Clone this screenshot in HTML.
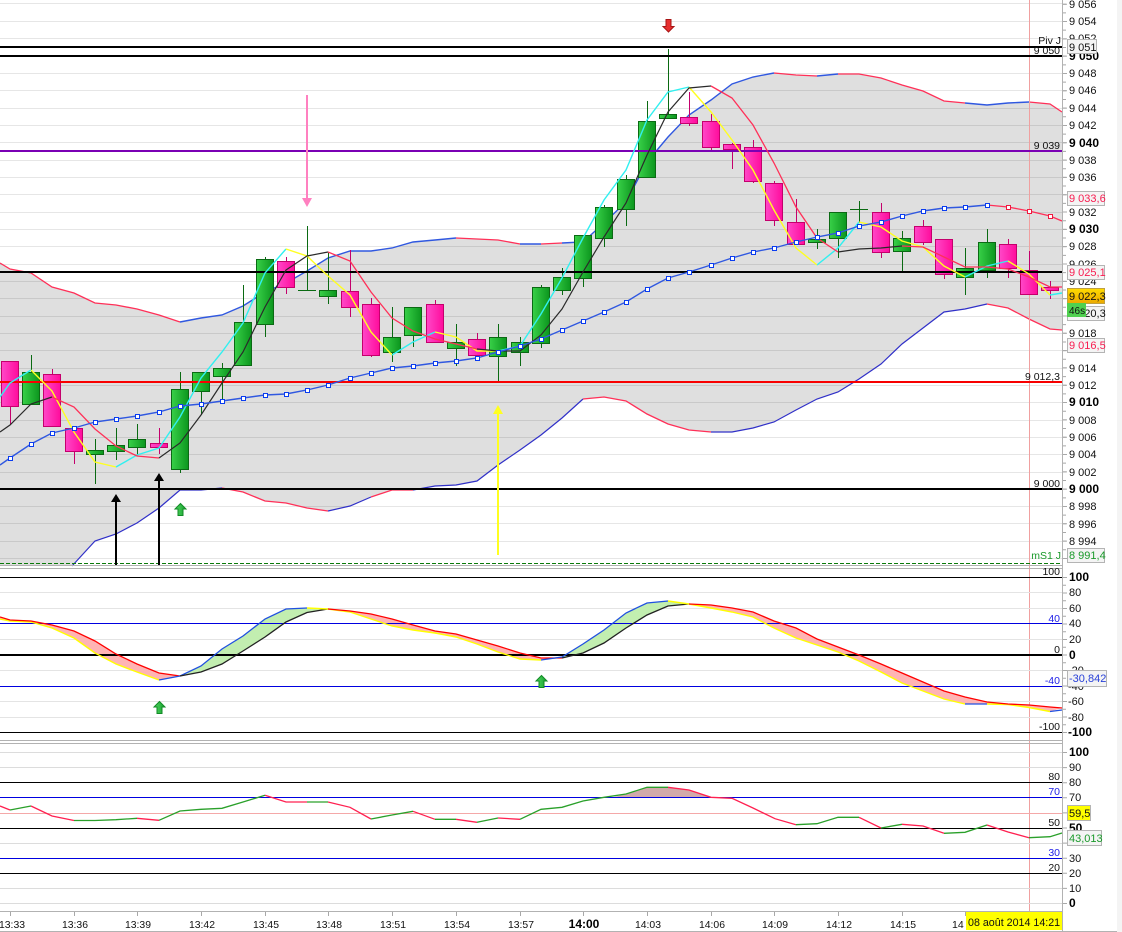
<!DOCTYPE html>
<html><head><meta charset="utf-8"><title>Chart</title>
<style>
html,body{margin:0;padding:0;background:#fff}
svg{display:block}
text{font-family:"Liberation Sans",sans-serif;font-size:11px;fill:#111}
.b{font-weight:bold;font-size:12px;fill:#000}
.s{font-size:10.5px}
.t{font-size:10.4px;text-anchor:middle}
.e{text-anchor:end;font-size:10.5px}
.bl{fill:#2020e8}
.r{fill:#f81c50}
.g{fill:#1a9a2a}
.ln{fill:none;stroke-linejoin:round}
.c{stroke:#30f0f0;stroke-width:1.4;fill:none}
.y{stroke:#ffff20;stroke-width:1.4;fill:none}
.k{stroke:#2a2a2a;stroke-width:1.2;fill:none}
.rd{stroke:#ff3058;stroke-width:1.3;fill:none}
.ub{stroke:#3058e0;stroke-width:1.4;fill:none}
.lb{stroke:#3030c8;stroke-width:1.2;fill:none}
.gb{fill:url(#gg);stroke:#0b6a14}
.pb{fill:url(#pg);stroke:#c4006c}
.box{fill:#f4f4f4;stroke:#b4b4b4}
.ga{fill:url(#ag);stroke:#128a26}
</style></head>
<body>
<svg xmlns="http://www.w3.org/2000/svg" width="1122" height="932" viewBox="0 0 1122 932">
<defs>
<linearGradient id="gg" x1="0" x2="1" y1="0" y2="0"><stop offset="0" stop-color="#38d048"/><stop offset="1" stop-color="#0c961e"/></linearGradient>
<linearGradient id="pg" x1="0" x2="1" y1="0" y2="0"><stop offset="0" stop-color="#ff48c8"/><stop offset="1" stop-color="#ff0c9c"/></linearGradient>
<linearGradient id="ag" x1="0" x2="1" y1="0" y2="0"><stop offset="0" stop-color="#50d860"/><stop offset="1" stop-color="#18a030"/></linearGradient>
<linearGradient id="og" x1="0" x2="0" y1="0" y2="1"><stop offset="0" stop-color="#ffdc00"/><stop offset="1" stop-color="#eca800"/></linearGradient>
</defs>
<rect width="1122" height="932" fill="#fff"/>
<rect x="1117" width="5" height="932" fill="#f4f4f4"/>

<!-- main grid -->
<path stroke="#e6e6e6" fill="none" shape-rendering="crispEdges" d="M0 3.5H1062M0 21.5H1062M0 38.5H1062M0 73.5H1062M0 90.5H1062M0 108.5H1062M0 125.5H1062M0 142.5H1062M0 160.5H1062M0 177.5H1062M0 194.5H1062M0 212.5H1062M0 229.5H1062M0 246.5H1062M0 264.5H1062M0 281.5H1062M0 298.5H1062M0 316.5H1062M0 333.5H1062M0 350.5H1062M0 368.5H1062M0 385.5H1062M0 402.5H1062M0 420.5H1062M0 437.5H1062M0 454.5H1062M0 472.5H1062M0 506.5H1062M0 523.5H1062M0 541.5H1062M0 558.5H1062"/>

<!-- Bollinger fill -->
<polygon fill="#000" fill-opacity=".125" points="0,263 10,269 31,273 52,287 74,293 95,303 116,305 137,309 159,315 180,322 201,318 222,315 243,306 265,292 286,283 307,271 328,258 350,251 371,251 392,248 413,242 435,240 456,238 477,239 498,240 520,244 541,244 562,243 583,242 604,223 626,202 647,162 668,137 689,115 711,100 732,84 753,77 774,73 796,75 817,76 838,74 859,74 881,78 902,85 923,91 944,101 965,103 987,105 1008,103 1029,102 1050,104 1062,112 1062,330 1050,329 1029,319 1008,308 987,304 965,309 944,312 923,328 902,344 881,364 859,379 838,392 817,399 796,410 774,422 753,428 732,432 711,432 689,430 668,424 647,414 626,401 604,397 583,399 562,418 541,435 520,450 498,465 477,481 456,485 435,486 413,490 392,490 371,497 350,506 328,511 307,508 286,503 265,501 243,492 222,488 201,490 180,490 159,508 137,523 116,534 95,541 72,565 0,565"/>

<!-- bands -->
<polyline class="rd" points="0,263 10,269 31,273 52,287 74,293 95,303 116,305 137,309 159,315 180,322"/>
<polyline class="ub" points="180,322 201,318 222,315 243,306 265,292 286,283 307,271 328,258 350,251 371,251 392,248 413,242 435,240 456,238"/>
<polyline class="rd" points="456,238 477,239 498,240 520,244"/>
<polyline class="ub" points="520,244 541,244"/>
<polyline class="rd" points="541,244 562,243"/>
<polyline class="ub" points="562,243 583,242 604,223 626,202 647,162 668,137 689,115 711,100 732,84 753,77 774,73"/>
<polyline class="rd" points="774,73 796,75 817,76"/>
<polyline class="ub" points="817,76 838,74"/>
<polyline class="rd" points="838,74 859,74 881,78 902,85 923,91 944,101 965,103"/>
<polyline class="ub" points="965,103 987,105 1008,103 1029,102"/>
<polyline class="rd" points="1029,102 1050,104 1062,112"/>
<polyline class="lb" points="72,566 95,541 116,534 137,523 159,508 180,490 201,490 222,488"/>
<polyline class="rd" points="222,488 243,492 265,501 286,503 307,508 328,511"/>
<polyline class="lb" points="328,511 350,506 371,497"/>
<polyline class="rd" points="371,497 392,490 413,490"/>
<polyline class="lb" points="413,490 435,486 456,485 477,481 498,465 520,450 541,435 562,418 583,399"/>
<polyline class="rd" points="583,399 604,397 626,401 647,414 668,424 689,430 711,432"/>
<polyline class="lb" points="711,432 732,432 753,428 774,422 796,410 817,399 838,392 859,379 881,364 902,344 923,328 944,312 965,309 987,304"/>
<polyline class="rd" points="987,304 1008,308 1029,319 1050,329 1062,330"/>

<!-- crosshair -->
<rect x="1029" y="0" width="1" height="912" fill="#f0a0a0"/>

<!-- wicks -->
<path stroke="#0a6a12" fill="none" shape-rendering="crispEdges" d="M31.5 355V404M95.5 439V484M116.5 428V460M137.5 424V456M180.5 372V473M201.5 372V415M222.5 363V400M243.5 285V365M265.5 257V337M307.5 226V290M328.5 252V304M392.5 307V362M413.5 307V347M456.5 324V366M498.5 324V381M520.5 337V366M541.5 285V348M562.5 268V295M583.5 235V287M604.5 205V247M626.5 175V226M647.5 101V177M668.5 49V118M817.5 229V249M838.5 212V258M859.5 201V223M902.5 231V271M965.5 248V295M987.5 229V278M298 290.5H316M850 209.5H868"/>
<path stroke="#c4006c" fill="none" shape-rendering="crispEdges" d="M10.5 361V425M52.5 369V426M74.5 428V464M159.5 428V454M286.5 257V294M350.5 250V317M371.5 298V357M435.5 300V343M477.5 333V355M689.5 92V126M711.5 114V150M732.5 143V169M753.5 140V183M774.5 181V226M796.5 199V244M881.5 203V258M923.5 220V245M944.5 239V279M1008.5 239V278M1029.5 251V294M1050.5 281V299"/>

<!-- bodies -->
<g shape-rendering="crispEdges">
<rect class="pb" x="1.5" y="361.5" width="17" height="45"/>
<rect class="gb" x="22.5" y="372.5" width="17" height="32"/>
<rect class="pb" x="43.5" y="374.5" width="17" height="52"/>
<rect class="pb" x="65.5" y="428.5" width="17" height="23"/>
<rect class="gb" x="86.5" y="450.5" width="17" height="4"/>
<rect class="gb" x="107.5" y="445.5" width="17" height="6"/>
<rect class="gb" x="128.5" y="439.5" width="17" height="8"/>
<rect class="pb" x="150.5" y="443.5" width="17" height="4"/>
<rect class="gb" x="171.5" y="389.5" width="17" height="80"/>
<rect class="gb" x="192.5" y="372.5" width="17" height="19"/>
<rect class="gb" x="213.5" y="368.5" width="17" height="8"/>
<rect class="gb" x="234.5" y="322.5" width="17" height="43"/>
<rect class="gb" x="256.5" y="259.5" width="17" height="65"/>
<rect class="pb" x="277.5" y="261.5" width="17" height="26"/>
<rect class="gb" x="319.5" y="290.5" width="17" height="6"/>
<rect class="pb" x="341.5" y="291.5" width="17" height="16"/>
<rect class="pb" x="362.5" y="304.5" width="17" height="51"/>
<rect class="gb" x="383.5" y="337.5" width="17" height="15"/>
<rect class="gb" x="404.5" y="307.5" width="17" height="28"/>
<rect class="pb" x="426.5" y="304.5" width="17" height="38"/>
<rect class="gb" x="447.5" y="342.5" width="17" height="6"/>
<rect class="pb" x="468.5" y="339.5" width="17" height="16"/>
<rect class="gb" x="489.5" y="337.5" width="17" height="19"/>
<rect class="gb" x="511.5" y="342.5" width="17" height="10"/>
<rect class="gb" x="532.5" y="287.5" width="17" height="56"/>
<rect class="gb" x="553.5" y="277.5" width="17" height="13"/>
<rect class="gb" x="574.5" y="235.5" width="17" height="43"/>
<rect class="gb" x="595.5" y="207.5" width="17" height="31"/>
<rect class="gb" x="617.5" y="179.5" width="17" height="30"/>
<rect class="gb" x="638.5" y="121.5" width="17" height="56"/>
<rect class="gb" x="659.5" y="114.5" width="17" height="4"/>
<rect class="pb" x="680.5" y="117.5" width="17" height="6"/>
<rect class="pb" x="702.5" y="121.5" width="17" height="26"/>
<rect class="pb" x="723.5" y="144.5" width="17" height="5"/>
<rect class="pb" x="744.5" y="147.5" width="17" height="34"/>
<rect class="pb" x="765.5" y="183.5" width="17" height="37"/>
<rect class="pb" x="787.5" y="222.5" width="17" height="22"/>
<rect class="gb" x="808.5" y="239.5" width="17" height="3"/>
<rect class="gb" x="829.5" y="212.5" width="17" height="26"/>
<rect class="pb" x="872.5" y="212.5" width="17" height="40"/>
<rect class="gb" x="893.5" y="238.5" width="17" height="13"/>
<rect class="pb" x="914.5" y="226.5" width="17" height="16"/>
<rect class="pb" x="935.5" y="239.5" width="17" height="35"/>
<rect class="gb" x="956.5" y="268.5" width="17" height="9"/>
<rect class="gb" x="978.5" y="242.5" width="17" height="28"/>
<rect class="pb" x="999.5" y="244.5" width="17" height="24"/>
<rect class="pb" x="1020.5" y="270.5" width="17" height="24"/>
<rect class="pb" x="1041.5" y="287.5" width="17" height="3"/>
</g>

<!-- horizontal levels -->
<g shape-rendering="crispEdges">
<rect x="0" y="46" width="1062" height="2" fill="#000"/>
<rect x="0" y="55" width="1062" height="2" fill="#000"/>
<rect x="0" y="150" width="1062" height="2" fill="#7a00b4"/>
<rect x="0" y="271" width="1062" height="2" fill="#000"/>
<rect x="0" y="381" width="1062" height="2" fill="#f80000"/>
<rect x="0" y="488" width="1062" height="2" fill="#000"/>
</g>
<line x1="0" x2="1062" y1="563.5" y2="563.5" stroke="#0a7a0a" stroke-dasharray="4 2"/>

<!-- fast MA -->
<polyline class="c" points="0,397 10,383 31,370"/>
<polyline class="y" points="31,370 52,391 74,432 95,462 116,467"/>
<polyline class="c" points="116,467 137,455 159,448 180,417 201,378 222,352 243,323 265,273 286,249"/>
<polyline class="y" points="286,249 307,256 328,276 350,295 371,332 392,355"/>
<polyline class="c" points="392,355 413,342 435,332"/>
<polyline class="y" points="435,332 456,337 477,351 498,351"/>
<polyline class="c" points="498,351 520,346 541,314 562,278 583,238 604,200 626,170 647,120 668,92 689,87"/>
<polyline class="y" points="689,87 711,112 732,140 753,170 774,210 796,248 817,265"/>
<polyline class="c" points="817,265 838,248 859,222"/>
<polyline class="y" points="859,222 881,227 902,241 923,247 944,266 965,277"/>
<polyline class="c" points="965,277 987,266 1008,261"/>
<polyline class="y" points="1008,261 1029,274 1050,295"/>
<polyline class="c" points="1050,295 1062,293"/>

<!-- slow MA -->
<polyline class="k" points="0,432 10,425 31,404 52,397"/>
<polyline class="rd" points="52,397 74,407 95,429 116,446 137,456 159,458"/>
<polyline class="k" points="159,458 180,443 201,415 222,383 243,352 265,307 286,270 307,256 328,252"/>
<polyline class="rd" points="328,252 350,261 371,292 392,318 413,331 435,339 456,344 477,349"/>
<polyline class="k" points="477,349 498,351 520,351 541,335 562,309 583,272 604,237 626,203 647,155 668,112 689,88 711,86"/>
<polyline class="rd" points="711,86 732,98 753,125 774,163 796,207 817,238 838,252"/>
<polyline class="k" points="838,252 859,249 881,248 902,246"/>
<polyline class="rd" points="902,246 923,247 944,257 965,267 987,267 1008,269 1029,277 1050,287 1062,287"/>

<!-- Blue MA with markers -->
<polyline class="ub" points="0,465 10,458 31,444 52,433 74,428 95,422 116,419 137,416 159,412 180,406 201,404 222,401 243,398 265,395 286,394 307,390 328,385 350,378 371,373 392,368 413,366 435,363 456,361 477,358 498,352 520,346 541,339 562,330 583,321 604,312 626,302 647,289 668,278 689,272 711,265 732,258 753,252 774,248 796,242 817,237 838,233 859,226 881,222 902,216 923,211 944,208 965,207 987,205"/>
<polyline class="rd" points="987,205 1008,207 1029,211 1050,216 1062,221"/>
<path fill="#fff" stroke="#0a3cf0" shape-rendering="crispEdges" d="M8.5 456.5h4v4h-4zM29.5 442.5h4v4h-4zM50.5 431.5h4v4h-4zM72.5 426.5h4v4h-4zM93.5 420.5h4v4h-4zM114.5 417.5h4v4h-4zM135.5 414.5h4v4h-4zM157.5 410.5h4v4h-4zM178.5 404.5h4v4h-4zM199.5 402.5h4v4h-4zM220.5 399.5h4v4h-4zM241.5 396.5h4v4h-4zM263.5 393.5h4v4h-4zM284.5 392.5h4v4h-4zM305.5 388.5h4v4h-4zM326.5 383.5h4v4h-4zM348.5 376.5h4v4h-4zM369.5 371.5h4v4h-4zM390.5 366.5h4v4h-4zM411.5 364.5h4v4h-4zM433.5 361.5h4v4h-4zM454.5 359.5h4v4h-4zM475.5 356.5h4v4h-4zM496.5 350.5h4v4h-4zM518.5 344.5h4v4h-4zM539.5 337.5h4v4h-4zM560.5 328.5h4v4h-4zM581.5 319.5h4v4h-4zM602.5 310.5h4v4h-4zM624.5 300.5h4v4h-4zM645.5 287.5h4v4h-4zM666.5 276.5h4v4h-4zM687.5 270.5h4v4h-4zM709.5 263.5h4v4h-4zM730.5 256.5h4v4h-4zM751.5 250.5h4v4h-4zM772.5 246.5h4v4h-4zM794.5 240.5h4v4h-4zM815.5 235.5h4v4h-4zM836.5 231.5h4v4h-4zM857.5 224.5h4v4h-4zM879.5 220.5h4v4h-4zM900.5 214.5h4v4h-4zM921.5 209.5h4v4h-4zM942.5 206.5h4v4h-4zM963.5 205.5h4v4h-4zM985.5 203.5h4v4h-4z"/>
<path fill="#fff" stroke="#f01840" shape-rendering="crispEdges" d="M1006.5 205.5h4v4h-4zM1027.5 209.5h4v4h-4zM1048.5 214.5h4v4h-4z"/>

<!-- arrows -->
<rect x="306" y="95" width="2" height="105" fill="#ff80c0"/>
<polygon points="302,198 312,198 307,207" fill="#ff80c0"/>
<rect x="497" y="412" width="2" height="143" fill="#ffff20"/>
<polygon points="493,414 503,414 498,405" fill="#ffff20"/>
<rect x="115" y="500" width="2" height="65" fill="#000"/>
<polygon points="111,502 121,502 116,494" fill="#000"/>
<rect x="158" y="479" width="2" height="86" fill="#000"/>
<polygon points="154,481 164,481 159,473" fill="#000"/>
<path class="ga" d="M180.5 503.5L186 509H183V515.5H178V509H175Z"/>
<path fill="#e83030" stroke="#a81414" d="M668.5 32L674 26.5H671V19.5H666V26.5H663Z"/>

<!-- panel separators -->
<path stroke="#b2b2b2" fill="none" shape-rendering="crispEdges" d="M0 565.5H1062M0 568.5H1062M0 740.5H1062M0 743.5H1062M0 911.5H1062M0 931.5H1117M1062.5 0V932"/>

<!-- mid panel grid -->
<path stroke="#e4e4e4" fill="none" shape-rendering="crispEdges" d="M0 592.5H1062M0 608.5H1062M0 639.5H1062M0 670.5H1062M0 701.5H1062M0 717.5H1062"/>
<!-- mid fills -->
<polygon fill="#ffb4b4" points="0,617 10,620 31,621 52,625 74,631 95,641 116,654 137,664 159,673 180,676 159,680 137,672 116,664 95,653 74,638 52,628 31,622 10,621 0,619"/>
<polygon fill="#c2eeb0" points="159,680 180,676 201,666 222,649 243,636 265,619 286,609 307,608 328,609 307,612.5 286,622 265,637 243,651 222,664 201,672 180,676"/>
<polygon fill="#ffb4b4" points="328,609 350,611 371,614 392,619 413,625 435,631 456,634 477,640 498,646 520,653 541,658 562,658 541,660 520,659 498,652 477,644 456,637 435,633 413,630 392,626 371,619 350,612"/>
<polygon fill="#c2eeb0" points="541,660 562,657 583,644 604,630 626,613 647,603 668,601 689,604 668,606 647,615 626,628 604,643 583,653 562,658"/>
<polygon fill="#ffb4b4" points="689,604 711,605 732,608 753,612 774,621 796,628 817,639 838,647 859,655 881,664 902,673 923,682 944,691 965,697 987,702 1008,704 1029,705 1050,707 1062,708 1050,711.5 1029,707.5 1008,704.5 987,704 965,704 944,699 923,691 902,683 881,672 859,661 838,652 817,645 796,638 774,628 753,617 732,612 711,608"/>
<!-- mid levels -->
<g shape-rendering="crispEdges">
<rect x="0" y="577" width="1062" height="1" fill="#000"/>
<rect x="0" y="623" width="1062" height="1" fill="#0000e0"/>
<rect x="0" y="654" width="1062" height="2" fill="#000"/>
<rect x="0" y="686" width="1062" height="1" fill="#0000e0"/>
<rect x="0" y="732" width="1062" height="1" fill="#000"/>
</g>
<!-- mid lines -->
<g fill="none" stroke-width="1.3">
<polyline stroke="#ffff00" stroke-width="1.4" points="0,619 10,621 31,622 52,628 74,638 95,653 116,664 137,672 159,680"/>
<polyline stroke="#ff0000" points="0,617 10,620 31,621 52,625 74,631 95,641 116,654 137,664 159,673 180,676"/>
<polyline stroke="#2050e0" points="159,680 180,676 201,666 222,649 243,636 265,619 286,609 307,608"/>
<polyline stroke="#222" points="180,676 201,672 222,664 243,651 265,637 286,622 307,612.5 328,609"/>
<polyline stroke="#ffff00" stroke-width="1.4" points="307,608 328,609 350,612 371,619 392,626 413,630 435,633 456,637 477,644 498,652 520,659 541,660"/>
<polyline stroke="#ff0000" points="328,609 350,611 371,614 392,619 413,625 435,631 456,634 477,640 498,646 520,653 541,658 562,658"/>
<polyline stroke="#2050e0" points="541,660 562,657 583,644 604,630 626,613 647,603 668,601"/>
<polyline stroke="#222" points="562,658 583,653 604,643 626,628 647,615 668,606 689,604"/>
<polyline stroke="#ffff00" stroke-width="1.4" points="668,601 689,604 711,608 732,612 753,617 774,628 796,638 817,645 838,652 859,661 881,672 902,683 923,691 944,699 965,704"/>
<polyline stroke="#2050e0" points="965,704 987,704"/>
<polyline stroke="#ffff00" stroke-width="1.4" points="987,704 1008,704.5 1029,707.5 1050,711.5"/>
<polyline stroke="#2050e0" points="1050,711.5 1062,710"/>
<polyline stroke="#ff0000" points="689,604 711,605 732,608 753,612 774,621 796,628 817,639 838,647 859,655 881,664 902,673 923,682 944,691 965,697 987,702 1008,704 1029,705 1050,707 1062,708"/>
</g>
<path class="ga" d="M159.5 701.5L165 707H162V713.5H157V707H154Z"/>
<path class="ga" d="M541.5 675.5L547 681H544V687.5H539V681H536Z"/>

<!-- third panel -->
<path stroke="#dcdcdc" fill="none" shape-rendering="crispEdges" d="M0 752.5H1062M0 767.5H1062M0 843.5H1062M0 888.5H1062M0 903.5H1062"/>
<polygon fill="#d2aaaa" points="612,797.5 626,794 647,787.3 668,787.3 689,790 711,797.5"/>
<g shape-rendering="crispEdges">
<rect x="0" y="813" width="1062" height="1" fill="#f4a8a8"/>
<rect x="0" y="782" width="1062" height="1" fill="#000"/>
<rect x="0" y="797" width="1062" height="1" fill="#0000e0"/>
<rect x="0" y="828" width="1062" height="1" fill="#000"/>
<rect x="0" y="858" width="1062" height="1" fill="#0000e0"/>
<rect x="0" y="873" width="1062" height="1" fill="#000"/>
</g>
<g fill="none" stroke-width="1.3">
<path stroke="#ff2050" d="M0 806L10 810M31 806L52 816L74 820.5M137 818.3L159 820.3M265 795.3L286 802L307 802M328 802L350 807.3L371 819M413 811.3L435 819.3M456 819.3L477 822.3M498 818L520 819.3M668 787.3L689 790L711 797.3L732 798.3L753 808L775 818.7L796 824.7M859 817.3L881 828M902 824.3L923 826L944 833.3M987 825L1008 832L1029 837.7"/>
<path stroke="#2aa02a" d="M10 810L31 806M74 820.5L95 820.5L116 819.7L137 818.3M159 820.3L180 811L201 809.3L222 808.3L243 802L265 795.3M307 802L328 802M371 819L392 815L413 811.3M435 819.3L456 819.3M477 822.3L498 818M520 819.3L541 809.3L562 807.3L583 801L604 797.3L626 794L647 787.3L668 787.3M796 824.7L817 823.7L838 817.3L859 817.3M881 828L902 824.3M944 833.3L965 832.3L987 825M1029 837.7L1050 836.7L1062 833"/>
</g>

<!-- axis ticks -->
<line x1="1064.5" x2="1064.5" y1="3.7" y2="565" stroke="#a8a8a8" stroke-width="3" stroke-dasharray="1 7.66"/>
<line x1="1065" x2="1065" y1="3.7" y2="565" stroke="#a8a8a8" stroke-width="4" stroke-dasharray="1 16.32"/>
<line x1="1064.5" x2="1064.5" y1="577" y2="733" stroke="#a8a8a8" stroke-width="3" stroke-dasharray="1 6.75"/>
<line x1="1065" x2="1065" y1="577" y2="733" stroke="#a8a8a8" stroke-width="4" stroke-dasharray="1 14.5"/>
<line x1="1065" x2="1065" y1="752" y2="905" stroke="#a8a8a8" stroke-width="4" stroke-dasharray="1 14.1"/>
<path stroke="#a8a8a8" shape-rendering="crispEdges" d="M10.5 912V916M74.5 912V916M137.5 912V916M201.5 912V916M265.5 912V916M328.5 912V916M392.5 912V916M456.5 912V916M520.5 912V916M583.5 912V916M647.5 912V916M711.5 912V916M774.5 912V916M838.5 912V916M902.5 912V916M965.5 912V916M1029.5 912V916"/>

<!-- axis labels main -->
<g>
<text x="1069" y="8">9 056</text><text x="1069" y="25">9 054</text><text x="1069" y="42">9 052</text><text class="b" x="1069" y="60">9 050</text>
<text x="1069" y="77">9 048</text><text x="1069" y="94">9 046</text><text x="1069" y="112">9 044</text><text x="1069" y="129">9 042</text>
<text class="b" x="1069" y="147">9 040</text><text x="1069" y="164">9 038</text><text x="1069" y="181">9 036</text>
<text x="1069" y="216">9 032</text><text class="b" x="1069" y="233">9 030</text><text x="1069" y="250">9 028</text><text x="1069" y="268">9 026</text>
<text x="1069" y="285">9 024</text><text x="1069" y="337">9 018</text><text x="1069" y="372">9 014</text><text x="1069" y="389">9 012</text>
<text class="b" x="1069" y="406">9 010</text><text x="1069" y="424">9 008</text><text x="1069" y="441">9 006</text><text x="1069" y="458">9 004</text>
<text x="1069" y="476">9 002</text><text class="b" x="1069" y="493">9 000</text><text x="1069" y="510">8 998</text><text x="1069" y="528">8 996</text><text x="1069" y="545">8 994</text>
</g>
<!-- mid axis -->
<g>
<text class="b" x="1069" y="581">100</text><text x="1069" y="596">80</text><text x="1069" y="612">60</text><text x="1069" y="627">40</text><text x="1069" y="643">20</text>
<text class="b" x="1069" y="659">0</text><text x="1068" y="674">-20</text><text x="1068" y="690">-40</text><text x="1068" y="705">-60</text><text x="1068" y="721">-80</text><text class="b" x="1068" y="736">-100</text>
</g>
<!-- third axis -->
<g>
<text class="b" x="1069" y="756">100</text><text x="1069" y="771">90</text><text x="1069" y="786">80</text><text x="1069" y="801">70</text>
<text class="b" x="1069" y="832">50</text><text x="1069" y="862">30</text><text x="1069" y="877">20</text><text x="1069" y="892">10</text><text class="b" x="1069" y="907">0</text>
</g>

<!-- inside labels -->
<text class="e" x="1061" y="44">Piv J</text>
<text class="e" x="1060" y="54">9 050</text>
<text class="e" x="1060" y="149">9 039</text>
<text class="e" x="1060" y="380">9 012,3</text>
<text class="e" x="1060" y="487">9 000</text>
<text class="e g" x="1061" y="559">mS1 J</text>
<text class="e" x="1060" y="575">100</text>
<text class="e bl" x="1060" y="622">40</text>
<text class="e" x="1060" y="653">0</text>
<text class="e bl" x="1060" y="684">-40</text>
<text class="e" x="1060" y="730">-100</text>
<text class="e" x="1060" y="780">80</text>
<text class="e bl" x="1060" y="795">70</text>
<text class="e" x="1060" y="826">50</text>
<text class="e bl" x="1060" y="856">30</text>
<text class="e" x="1060" y="871">20</text>

<!-- axis boxes -->
<g shape-rendering="crispEdges">
<rect class="box" x="1067.5" y="39.5" width="29" height="14"/>
<rect class="box" x="1067.5" y="191.5" width="37" height="14"/>
<rect class="box" x="1067.5" y="265.5" width="37" height="14"/>
<rect class="box" x="1067.5" y="306.5" width="37" height="14"/>
<rect x="1067.5" y="288.5" width="37" height="15" fill="url(#og)" stroke="#c0a040"/>
<rect x="1067" y="303" width="19" height="14" fill="#50d050"/>
<rect class="box" x="1067.5" y="338.5" width="37" height="14"/>
<rect class="box" x="1067.5" y="548.5" width="37" height="14"/>
<rect class="box" x="1067.5" y="670.5" width="39" height="16"/>
<rect x="1067.5" y="805.5" width="23" height="15" fill="#ffff00" stroke="#b4b4b4"/>
<rect class="box" x="1067.5" y="830.5" width="34" height="15"/>
<rect x="966" y="912" width="96" height="18" fill="#ffff00"/>
</g>
<text x="1069" y="51">9 051</text>
<text class="r" x="1069" y="202">9 033,6</text>
<text class="r" x="1069" y="276">9 025,1</text>
<text x="1069" y="300">9 022,3</text>
<text x="1069" y="317">9 020,3</text>
<rect x="1067" y="303" width="19" height="14" fill="#50d050" shape-rendering="crispEdges"/>
<text x="1069" y="314" style="font-size:10px">46s</text>
<text class="r" x="1069" y="349">9 016,5</text>
<text class="g" x="1069" y="559">8 991,4</text>
<text x="1069" y="682" style="fill:#2840d8">-30,842</text>
<text x="1069" y="817">59,5</text>
<text class="g" x="1069" y="842">43,013</text>

<!-- time labels -->
<g>
<text class="t" x="12" y="928">13:33</text><text class="t" x="75" y="928">13:36</text><text class="t" x="138" y="928">13:39</text><text class="t" x="202" y="928">13:42</text>
<text class="t" x="266" y="928">13:45</text><text class="t" x="329" y="928">13:48</text><text class="t" x="393" y="928">13:51</text><text class="t" x="457" y="928">13:54</text>
<text class="t" x="521" y="928">13:57</text><text class="b" x="584" y="928" text-anchor="middle">14:00</text><text class="t" x="648" y="928">14:03</text><text class="t" x="712" y="928">14:06</text>
<text class="t" x="775" y="928">14:09</text><text class="t" x="839" y="928">14:12</text><text class="t" x="903" y="928">14:15</text><text class="s" x="952" y="928">14</text>
<text x="968" y="926" style="font-size:10.7px">08 août 2014 14:21</text>
</g>
</svg>
</body></html>
